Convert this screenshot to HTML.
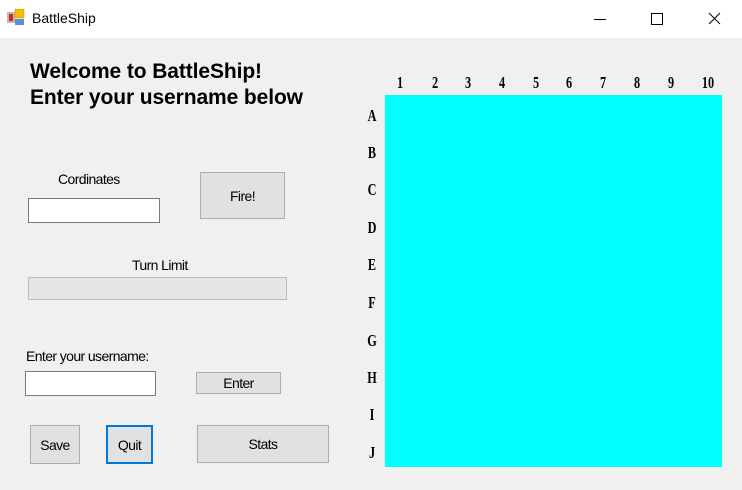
<!DOCTYPE html>
<html><head><style>
body{margin:0;width:742px;height:490px;background:#f0f0f0;position:relative;overflow:hidden;font-family:"Liberation Sans",sans-serif}
.a{position:absolute}
.tb{left:0;top:0;width:742px;height:38px;background:#fff}
.btn{position:absolute;background:#e1e1e1;border:1px solid #adadad;box-sizing:border-box;font-size:14px;color:#000;display:flex;align-items:center;justify-content:center;letter-spacing:-0.6px}
.inp{position:absolute;background:#fff;border:1px solid #7a7a7a;box-sizing:border-box}
.lbl{position:absolute;font-size:14px;letter-spacing:-0.6px;color:#000}
.n{position:absolute;font-family:"Liberation Serif",serif;font-weight:bold;font-size:17px;transform:scaleX(0.72);transform-origin:center;width:20px;text-align:center;color:#000}
</style></head><body>
<div class="a tb"></div>
<svg class="a" style="left:7px;top:9px" width="18" height="18" viewBox="0 0 18 18">
<rect x="0" y="3" width="8" height="11" fill="#bbb"/><rect x="2" y="5" width="4" height="7" fill="#d22"/>
<rect x="8" y="0" width="9" height="9" fill="#f5c000" stroke="#b80" stroke-width="0.5"/>
<rect x="8" y="10" width="9" height="6" fill="#5a8fd8"/></svg>
<div class="a" style="left:32px;top:10px;font-size:14px">BattleShip</div>
<svg class="a" style="left:590px;top:12px" width="140" height="14"><path d="M4 7.5h12" stroke="#000" stroke-width="1"/><rect x="61.5" y="1.5" width="11" height="11" fill="none" stroke="#000"/><path d="M119 1l11 11M130 1l-11 11" stroke="#000"/></svg>
<div class="a" style="left:30px;top:59px;font-size:21px;font-weight:bold;line-height:26px;letter-spacing:-0.1px">Welcome to BattleShip!<br>Enter your username below</div>
<div class="lbl" style="left:58px;top:171px">Cordinates</div>
<div class="inp" style="left:28px;top:198px;width:132px;height:25px"></div>
<div class="btn" style="left:200px;top:172px;width:85px;height:47px">Fire!</div>
<div class="lbl" style="left:132px;top:257px">Turn Limit</div>
<div class="a" style="left:28px;top:277px;width:259px;height:23px;background:#e6e6e6;border:1px solid #bcbcbc;box-sizing:border-box"></div>
<div class="lbl" style="left:26px;top:348px">Enter your username:</div>
<div class="inp" style="left:25px;top:371px;width:131px;height:25px"></div>
<div class="btn" style="left:196px;top:372px;width:85px;height:22px">Enter</div>
<div class="btn" style="left:30px;top:425px;width:50px;height:39px">Save</div>
<div class="btn" style="left:106px;top:425px;width:47px;height:39px;border:2px solid #0078d7">Quit</div>
<div class="btn" style="left:197px;top:425px;width:132px;height:38px">Stats</div>
<div class="a" style="left:385px;top:95px;width:337px;height:372px;background:#00ffff"></div>
<div class="n" style="left:390px;top:73px">1</div><div class="n" style="left:425px;top:73px">2</div><div class="n" style="left:458px;top:73px">3</div><div class="n" style="left:492px;top:73px">4</div><div class="n" style="left:526px;top:73px">5</div><div class="n" style="left:559px;top:73px">6</div><div class="n" style="left:593px;top:73px">7</div><div class="n" style="left:627px;top:73px">8</div><div class="n" style="left:661px;top:73px">9</div><div class="n" style="left:698px;top:73px">10</div>
<div class="n" style="left:362px;top:106px">A</div><div class="n" style="left:362px;top:143px">B</div><div class="n" style="left:362px;top:180px">C</div><div class="n" style="left:362px;top:218px">D</div><div class="n" style="left:362px;top:255px">E</div><div class="n" style="left:362px;top:293px">F</div><div class="n" style="left:362px;top:331px">G</div><div class="n" style="left:362px;top:368px">H</div><div class="n" style="left:362px;top:405px">I</div><div class="n" style="left:362px;top:443px">J</div>
</body></html>
